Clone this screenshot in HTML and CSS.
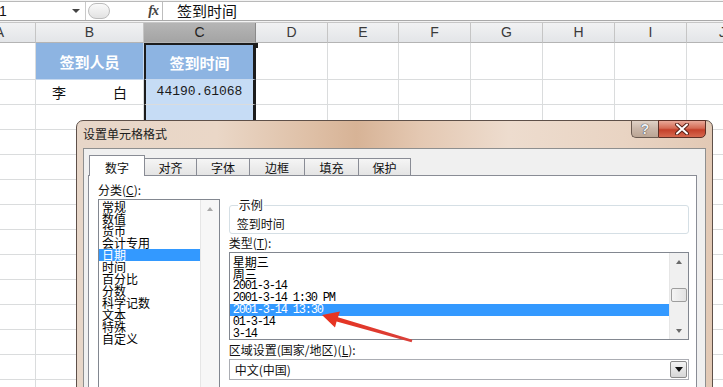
FILE: index.html
```html
<!DOCTYPE html>
<html>

<head>
    <title>设置单元格格式</title>
    <link rel="stylesheet" href="styles.css">
    <script>
        document.addEventListener('DOMContentLoaded', start);

        function start() {
            var sheet = document.getElementById('sheet');
            for (var r = 3; r <= 14; r++) {
                for (var c = 0; c < 10; c++) {
                    var cell = document.createElement('div');
                    cell.className = c == 2 ? 'cell sel' : 'cell';
                    sheet.appendChild(cell);
                }
            }
        }
    </script>
</head>

<body>
    <div class="top">
        <div class="formula-bar">
            <div class="name-box"><span class="name">C1</span><span class="drop"></span></div>
            <div class="fx-area"><span class="grip"></span><span class="fx">fx</span></div>
            <div class="formula">签到时间</div>
        </div>
    </div>

    <div class="sheet" id="sheet">
        <div class="head">A</div>
        <div class="head">B</div>
        <div class="head current">C</div>
        <div class="head">D</div>
        <div class="head">E</div>
        <div class="head">F</div>
        <div class="head">G</div>
        <div class="head">H</div>
        <div class="head">I</div>
        <div class="head">J</div>

        <div class="cell"></div>
        <div class="cell title-cell">签到人员</div>
        <div class="cell title-cell sel first">签到时间</div>
        <div class="cell"></div>
        <div class="cell"></div>
        <div class="cell"></div>
        <div class="cell"></div>
        <div class="cell"></div>
        <div class="cell"></div>
        <div class="cell"></div>

        <div class="cell"></div>
        <div class="cell name-cell">李 白</div>
        <div class="cell sel value">44190.61068</div>
        <div class="cell"></div>
        <div class="cell"></div>
        <div class="cell"></div>
        <div class="cell"></div>
        <div class="cell"></div>
        <div class="cell"></div>
        <div class="cell"></div>
    </div>

    <div class="dialog">
        <div class="titlebar">
            <span class="title">设置单元格格式</span>
            <div class="caption-buttons">
                <span class="help">?</span>
                <span class="close">
                    <svg width="14" height="12" viewBox="0 0 14 12">
                        <path d="M2 1.5 L12 10.5 M12 1.5 L2 10.5" stroke="#5a2218" stroke-width="4" stroke-linecap="round" />
                        <path d="M2 1.5 L12 10.5 M12 1.5 L2 10.5" stroke="#fff" stroke-width="2" stroke-linecap="round" />
                    </svg>
                </span>
            </div>
        </div>
        <div class="client">
            <div class="tabs">
                <span class="tab active">数字</span>
                <span class="tab w52">对齐</span>
                <span class="tab w53">字体</span>
                <span class="tab w55">边框</span>
                <span class="tab w54">填充</span>
                <span class="tab w52">保护</span>
            </div>
            <div class="panel">
                <div class="left">
                    <div class="label">分类(<u>C</u>):</div>
                    <div class="listbox cat-list">
                        <ul>
                            <li>常规</li>
                            <li>数值</li>
                            <li>货币</li>
                            <li>会计专用</li>
                            <li class="selected">日期</li>
                            <li>时间</li>
                            <li>百分比</li>
                            <li>分数</li>
                            <li>科学记数</li>
                            <li>文本</li>
                            <li>特殊</li>
                            <li>自定义</li>
                        </ul>
                        <div class="vscroll pale">
                            <span class="arrow-btn"><span class="up"></span></span>
                        </div>
                    </div>
                </div>
                <div class="right">
                    <fieldset class="sample">
                        <legend>示例</legend>
                        <div class="sample-text">签到时间</div>
                    </fieldset>
                    <div class="label type-label">类型(<u>T</u>):</div>
                    <div class="listbox type-list">
                        <ul>
                            <li>星期三</li>
                            <li>周三</li>
                            <li class="en">2001-3-14</li>
                            <li class="en">2001-3-14 1:30 PM</li>
                            <li class="en selected">2001-3-14 13:30</li>
                            <li class="en">01-3-14</li>
                            <li class="en">3-14</li>
                        </ul>
                        <div class="vscroll">
                            <span class="arrow-btn"><span class="up"></span></span>
                            <span class="track-top"></span>
                            <span class="thumb"></span>
                            <span class="track-bottom"></span>
                            <span class="arrow-btn"><span class="down"></span></span>
                        </div>
                    </div>
                    <div class="label locale-label">区域设置(国家/地区)(<u>L</u>):</div>
                    <div class="combo">
                        <span>中文(中国)</span>
                        <span class="combo-btn"><span class="down dark"></span></span>
                    </div>
                </div>
            </div>
        </div>
    </div>

    <svg class="pointer" width="723" height="387" viewBox="0 0 723 387">
        <defs>
            <linearGradient id="red" x1="0" y1="0" x2="1" y2="0">
                <stop offset="0" stop-color="#e8321f" />
                <stop offset="1" stop-color="#d9403a" />
            </linearGradient>
        </defs>
        <polygon points="322,315 340,311.5 338,317.2 412.4,339.8 411.6,342.2 336.6,321.6 335,327.5" fill="url(#red)" />
    </svg>
</body>

</html>
```

FILE: styles.css
```css
body {
    margin: 0;
    width: 723px;
    height: 387px;
    overflow: hidden;
    position: relative;
    background-color: #fff;
    font-family: "Noto Sans CJK SC", sans-serif;
}

/* formula bar */

.top {
    padding-top: 1px;
    padding-bottom: 1px;
    border-bottom: 1px solid #c6c6c6;
    background-color: #f3f3f3;
}

.formula-bar {
    display: flex;
    height: 18px;
    border-top: 1px solid #b9b9b9;
    border-bottom: 1px solid #a9a9a9;
    background-color: #fff;
}

.name-box {
    width: 86px;
    display: flex;
    align-items: center;
    justify-content: space-between;
    box-sizing: border-box;
    padding-right: 5px;
    border-right: 1px solid #c9c9c9;
    overflow: hidden;
}

.name {
    font-family: "Liberation Sans", sans-serif;
    font-size: 14px;
    margin-left: -11px;
    color: #111;
}

.drop {
    width: 0;
    height: 0;
    border-left: 4px solid transparent;
    border-right: 4px solid transparent;
    border-top: 4px solid #444;
}

.fx-area {
    width: 77px;
    display: flex;
    align-items: center;
    justify-content: space-between;
    box-sizing: border-box;
    padding-right: 4px;
    border-right: 1px solid #bdbdbd;
}

.grip {
    width: 22px;
    height: 16px;
    margin-left: 2px;
    box-sizing: border-box;
    border: 1px solid #bcbcbc;
    border-radius: 9px;
    background: linear-gradient(#fafafa, #e2e2e2);
}

.fx {
    font-family: "Liberation Serif", serif;
    font-style: italic;
    font-weight: bold;
    font-size: 14px;
    color: #444;
    letter-spacing: -1px;
}

.formula {
    flex: 1;
    font-size: 15px;
    line-height: 18px;
    padding-left: 14px;
    color: #111;
}

/* sheet */

.sheet {
    display: grid;
    grid-template-columns: 72px 108px 112px 72px 71px 72px 72px 72px 72px 72px;
    grid-template-rows: 20px 37px 25px;
    grid-auto-rows: 25px;
    margin-left: -36px;
    width: 795px;
}

.head {
    box-sizing: border-box;
    border-right: 1px solid #c5c5c5;
    border-bottom: 1px solid #b4b4b4;
    background: linear-gradient(#f1f2f3, #e3e5e8);
    text-align: center;
    font-family: "Liberation Sans", sans-serif;
    font-size: 14px;
    line-height: 19px;
    color: #3a3a3a;
}

.head.current {
    background: linear-gradient(#b5b5b5, #a4a4a4);
    border-right-color: #8a8a8a;
    color: #222;
}

.cell {
    box-sizing: border-box;
    border-right: 1px solid #dadcdd;
    border-bottom: 1px solid #dadcdd;
}

.cell.sel {
    background-color: #c6dcf5;
    border-left: 2px solid #1c1c1c;
    border-right: 3px solid #1c1c1c;
}

.title-cell {
    background-color: #8db4e2;
    color: #fff;
    font-weight: bold;
    font-size: 15px;
    display: flex;
    align-items: center;
    justify-content: center;
    border-color: #c7d9ef;
}

.cell.title-cell.sel {
    background-color: #8db4e2;
}

.cell.first {
    position: relative;
    border-top: 2px solid #1c1c1c;
}

.cell.first::after {
    content: "";
    position: absolute;
    right: -5px;
    top: -2px;
    width: 5px;
    height: 5px;
    background-color: #1c1c1c;
}

.name-cell {
    font-size: 14px;
    line-height: 24px;
    padding: 0 16px;
    text-align: justify;
    text-align-last: justify;
    color: #111;
}

.value {
    font-family: "Liberation Mono", monospace;
    font-size: 13px;
    line-height: 24px;
    text-align: center;
    color: #1a1a1a;
}

/* dialog */

.dialog {
    position: absolute;
    left: 76px;
    top: 120px;
    width: 637px;
    height: 290px;
    box-sizing: border-box;
    border: 1px solid #5e5049;
    border-radius: 7px 7px 0 0;
    padding: 0 6px;
    background: linear-gradient(90deg, #e7d6c8 0%, #ead7c7 22%, #dfc1a8 36%, #d7b396 44%, #e4c8b2 54%, #eddcce 68%, #e9d4c3 86%, #e2c9b5 100%);
}

.titlebar {
    height: 27px;
    display: flex;
    justify-content: space-between;
    align-items: flex-start;
}

.title {
    font-size: 12px;
    line-height: 26px;
    color: #1b1b1b;
}

.caption-buttons {
    display: flex;
    margin-top: -1px;
}

.help {
    width: 27px;
    height: 18px;
    box-sizing: border-box;
    border: 1px solid #6a5a50;
    border-right: none;
    border-radius: 0 0 0 5px;
    background: linear-gradient(#e0d2c6, #c9b6a8 50%, #bba594);
    text-align: center;
    font-family: "Liberation Sans", sans-serif;
    font-weight: bold;
    font-size: 14px;
    line-height: 17px;
    color: #eef0f4;
    text-shadow: 0 0 1px #3a3f4a, 0 0 1px #3a3f4a;
}

.close {
    width: 48px;
    height: 18px;
    box-sizing: border-box;
    border: 1px solid #5d3027;
    border-radius: 0 0 5px 0;
    background: linear-gradient(#e9a898, #d56b55 45%, #c4402a 55%, #d6684f);
    display: flex;
    align-items: center;
    justify-content: center;
}

.client {
    height: 300px;
    box-sizing: border-box;
    border: 1px solid #8e8f8f;
    background-color: #f0f0f0;
    padding: 6px 8px 0 4px;
}

.tabs {
    display: flex;
    align-items: flex-end;
    height: 20px;
    padding-left: 1px;
}

.tab {
    position: relative;
    height: 17px;
    width: 54px;
    box-sizing: border-box;
    border: 1px solid #898c95;
    border-left: none;
    border-bottom: none;
    background: linear-gradient(#f5f5f5, #e4e4e4);
    text-align: center;
    font-size: 12px;
    line-height: 17px;
    color: #111;
}

.tab.active {
    height: 21px;
    width: 56px;
    margin-bottom: -1px;
    border-left: 1px solid #898c95;
    background: #fff;
    line-height: 23px;
    z-index: 1;
}

.tab.w52 {
    width: 52px;
}

.tab.w53 {
    width: 53px;
}

.tab.w54 {
    width: 54px;
}

.tab.w55 {
    width: 55px;
}

.panel {
    height: 260px;
    box-sizing: border-box;
    border: 1px solid #898c95;
    background-color: #fff;
    display: flex;
    padding: 7px 7px 0 9px;
}

.label {
    font-size: 12px;
    line-height: 14px;
    color: #111;
}

.left {
    width: 122px;
}

.listbox {
    display: flex;
    box-sizing: border-box;
    border: 1px solid #828790;
    background-color: #fff;
    overflow: hidden;
}

.listbox ul {
    flex: 1;
    list-style: none;
    margin: 0;
    padding: 0;
}

.listbox li {
    font-size: 12px;
    line-height: 12px;
    height: 12px;
    padding-left: 3px;
    color: #000;
    white-space: nowrap;
}

.listbox li.selected {
    background-color: #3399ff;
    color: #fff;
}

.cat-list {
    margin-top: 2px;
    height: 200px;
}

.cat-list ul {
    padding-top: 1px;
}

.vscroll {
    width: 18px;
    display: flex;
    flex-direction: column;
    background-color: #f0f0f0;
    border-left: 1px solid #e6e6e6;
}

.vscroll.pale {
    background-color: #f7f7f7;
}

.arrow-btn {
    height: 17px;
    display: flex;
    align-items: center;
    justify-content: center;
}

.up {
    width: 0;
    height: 0;
    border-left: 3px solid transparent;
    border-right: 3px solid transparent;
    border-bottom: 4px solid #6a6a6a;
}

.pale .up {
    border-bottom-color: #aaa;
}

.down {
    width: 0;
    height: 0;
    border-left: 3px solid transparent;
    border-right: 3px solid transparent;
    border-top: 4px solid #6a6a6a;
}

.down.dark {
    border-left-width: 4px;
    border-right-width: 4px;
    border-top: 5px solid #111;
}

.track-top {
    height: 18px;
}

.thumb {
    height: 14px;
    margin: 0 1px;
    box-sizing: border-box;
    border: 1px solid #9d9d9d;
    border-radius: 2px;
    background: linear-gradient(90deg, #f4f4f4, #e2e2e2);
}

.track-bottom {
    flex: 1;
}

.right {
    width: 461px;
    margin-left: 9px;
}

.sample {
    margin: 16px 0 0 0;
    padding: 7px 7px 3px 7px;
    border: 1px solid #d5dfe5;
    border-radius: 3px;
    min-inline-size: 0;
}

.sample legend {
    padding: 0 1px;
    margin-left: 1px;
    font-size: 12px;
    line-height: 12px;
    color: #111;
}

.sample-text {
    font-size: 12px;
    line-height: 12px;
    color: #111;
}

.type-label {
    margin-top: 3px;
    line-height: 12px;
}

.type-list {
    margin-top: 3px;
    height: 88px;
}

.type-list ul {
    padding-top: 3px;
}

.type-list li.en {
    font-family: "Liberation Mono", monospace;
    letter-spacing: -1.2px;
}

.locale-label {
    margin-top: 4px;
    line-height: 12px;
}

.combo {
    margin-top: 3px;
    height: 21px;
    box-sizing: border-box;
    border: 1px solid #abadb3;
    display: flex;
    align-items: center;
    justify-content: space-between;
    padding-left: 5px;
    padding-right: 1px;
    font-size: 12px;
    color: #111;
}

.combo-btn {
    width: 17px;
    height: 17px;
    box-sizing: border-box;
    border: 1px solid #8a8a8a;
    border-radius: 2px;
    background: linear-gradient(#f4f4f4, #d6d6d6);
    display: flex;
    align-items: center;
    justify-content: center;
}

.pointer {
    position: absolute;
    left: 0;
    top: 0;
    pointer-events: none;
}
```
